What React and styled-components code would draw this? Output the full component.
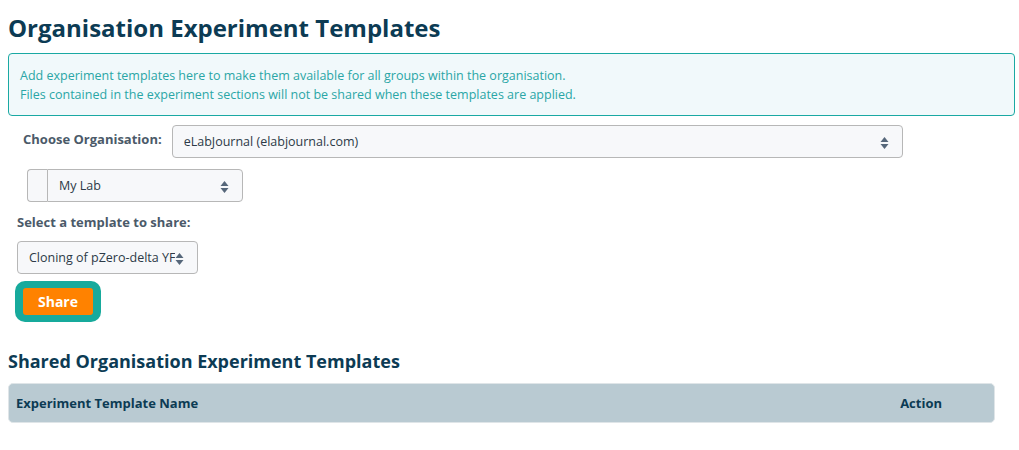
import React from 'react';
import styled, { createGlobalStyle } from 'styled-components';

const Global = createGlobalStyle`
  body {
    margin: 0;
    background: #fff;
    font-family: "Open Sans", "Noto Sans", sans-serif;
  }
`;

const Page = styled.div`
  padding: 0 8px;
`;

const Title = styled.h1`
  margin: 0;
  padding-top: 11px;
  font-size: 24px;
  line-height: 33px;
  font-weight: 700;
  color: #0c3b54;
`;

const Alert = styled.div`
  margin-top: 9px;
  width: 1007px;
  box-sizing: border-box;
  border: 1px solid #1aa9a3;
  border-radius: 4px;
  background: #f1f9fb;
  padding: 12px 11px 11px;
  color: #2aa6a6;
  font-size: 12.5px;
  line-height: 19px;
`;

const FormRow = styled.div`
  display: flex;
  align-items: flex-start;
  gap: ${(p) => p.gap || 0}px;
  padding-left: ${(p) => p.indent || 0}px;
  margin-top: ${(p) => p.top || 0}px;
`;

const Label = styled.label`
  display: block;
  font-size: 13px;
  font-weight: 700;
  color: #4b5a69;
  line-height: 18px;
  padding-top: ${(p) => p.pad || 0}px;
`;

const SelectBox = styled.div`
  position: relative;
  width: ${(p) => p.w}px;
  height: 33px;
  box-sizing: border-box;
  border: 1px solid #b7b7b7;
  border-radius: ${(p) => (p.joined ? '0 4px 4px 0' : '4px')};
  background: #f7f8fa;
  display: flex;
  align-items: center;
  padding: 0 22px 0 11px;
  font-size: 12.5px;
  color: #2c3a47;
  white-space: nowrap;
  overflow: hidden;
`;

const SelectText = styled.span`
  overflow: hidden;
  flex: 1;
`;

const Caret = styled.svg`
  position: absolute;
  right: 13px;
  top: 11px;
`;

const Addon = styled.div`
  width: 20px;
  height: 33px;
  box-sizing: border-box;
  border: 1px solid #b7b7b7;
  border-right: none;
  border-radius: 4px 0 0 4px;
  background: #f7f8fa;
`;

const Ring = styled.div`
  display: inline-flex;
  margin-top: 7px;
  margin-left: 7px;
  padding: 7px 8px;
  border-radius: 10px;
  background: #17aa9c;
`;

const ShareButton = styled.button`
  width: 70px;
  height: 27px;
  border: none;
  border-radius: 3px;
  background: #ff8200;
  color: #fff;
  font-family: inherit;
  font-size: 14px;
  font-weight: 700;
  padding: 0;
`;

const SubTitle = styled.h2`
  margin: 26px 0 0;
  font-size: 18px;
  line-height: 26px;
  font-weight: 700;
  color: #0c3b54;
`;

const TableHead = styled.div`
  margin-top: 9px;
  width: 987px;
  height: 40px;
  box-sizing: border-box;
  border-radius: 5px;
  background: #b9cad2;
  border: 1px solid #dfe5e8;
  display: flex;
  align-items: center;
  justify-content: space-between;
  padding: 0 52px 0 7px;
  font-size: 13px;
  font-weight: 700;
  color: #0c3b54;
`;

const Arrows = () => (
  <Caret width="9" height="12" viewBox="0 0 9 12">
    <path d="M4.5 0 L8.5 5 H0.5 Z" fill="#56677a" />
    <path d="M4.5 12 L8.5 7 H0.5 Z" fill="#56677a" />
  </Caret>
);

const Select = ({ w, joined, children }) => (
  <SelectBox w={w} joined={joined}>
    <SelectText>{children}</SelectText>
    <Arrows />
  </SelectBox>
);

export default function App() {
  return (
    <Page>
      <Global />
      <Title>Organisation Experiment Templates</Title>
      <Alert>
        Add experiment templates here to make them available for all groups within the organisation.
        <br />
        Files contained in the experiment sections will not be shared when these templates are applied.
      </Alert>

      <FormRow indent={15} gap={10} top={9}>
        <Label pad={5}>Choose Organisation:</Label>
        <Select w={731}>eLabJournal (elabjournal.com)</Select>
      </FormRow>

      <FormRow indent={19} top={11}>
        <Addon />
        <Select w={196} joined>My Lab</Select>
      </FormRow>

      <FormRow indent={9} top={11}>
        <Label>Select a template to share:</Label>
      </FormRow>
      <FormRow indent={9} top={10}>
        <Select w={181}>Cloning of pZero-delta YFP</Select>
      </FormRow>

      <Ring>
        <ShareButton>Share</ShareButton>
      </Ring>

      <SubTitle>Shared Organisation Experiment Templates</SubTitle>
      <TableHead>
        <span>Experiment Template Name</span>
        <span>Action</span>
      </TableHead>
    </Page>
  );
}
